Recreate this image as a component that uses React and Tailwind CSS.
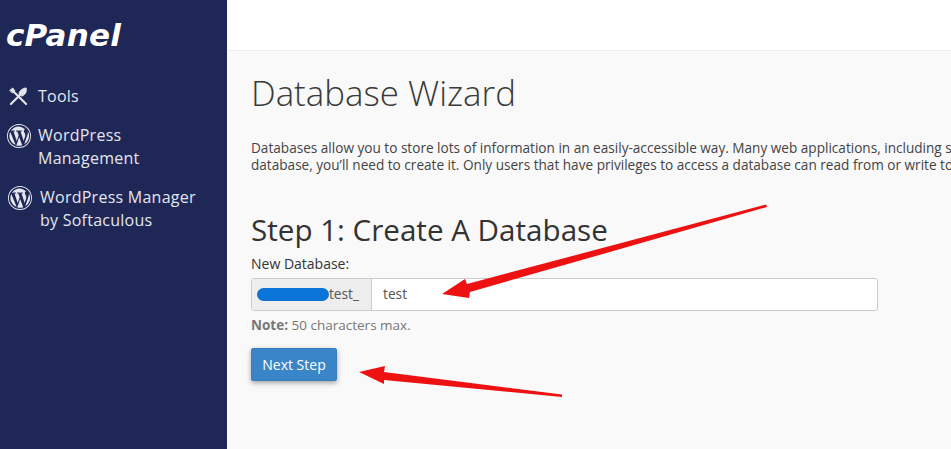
import React from 'react';

const WordPressIcon = () => (
  <svg viewBox="0 0 24 24" className="w-6 h-6 shrink-0" fill="#e4e6ee">
    <path fillRule="evenodd" d="M12 0a12 12 0 1 0 0 24 12 12 0 0 0 0-24zm0 .9a11.1 11.1 0 1 1 0 22.2A11.1 11.1 0 0 1 12 .9zm0 1.5a9.6 9.6 0 0 0-8 4.3h.9c1 0 2.6-.1 2.6-.1.5 0 .6.7 0 .8l-1 .1 3.2 9.6 2-5.8-1.4-3.8-1-.1c-.5 0-.4-.8.1-.8 0 0 1.600.1 2.500.1 1 0 2.600-.1 2.600-.1.5 0 .6.7 0 .8l-1 .1 3.200 9.500.9-3c.4-1.200.7-2.100.7-2.800 0-1.100-.4-1.800-.7-2.300-.4-.7-.8-1.300-.8-2 0-.8.6-1.500 1.400-1.500h.1A9.600 9.600 0 0 0 12 2.400zM3.300 8A9.600 9.600 0 0 0 8.700 21L3.300 8zm17.500-.8c0 .3.100.7.100 1.100 0 1-.2 2.200-.8 3.600l-2.900 8.400A9.600 9.600 0 0 0 20.800 7.200zM12.200 13l-2.900 8.400a9.600 9.600 0 0 0 5.900-.2l-3-8.200z" />
  </svg>
);

const ToolsIcon = () => (
  <svg viewBox="0 0 20 20" className="w-[19px] h-[19px] shrink-0" fill="none" stroke="#e4e6ee" strokeWidth="2.200" strokeLinecap="round">
    <path d="M5 5l13 13" />
    <path d="M1 3.500l3-2.500 2 3-2 2z" fill="#e4e6ee" strokeWidth="1" />
    <path d="M2 18l9-9" />
    <path d="M10.500 7.500c0-3 3-6 7.500-6.500 1 4-1 7.500-4.500 8.500z" fill="#e4e6ee" strokeWidth="1" />
  </svg>
);

const Arrows = () => (
  <svg className="absolute inset-0 pointer-events-none" width="951" height="449" viewBox="0 0 951 449">
    <path d="M766 204.500L767 207L470 292L469 298L442 294L465 279L467 284z" fill="#ee1111" />
    <path d="M359 372L385 366L384 372L562 394.500L562 397L384 380L384 384z" fill="#ee1111" />
  </svg>
);

export default function App() {
  return (
    <div className="relative flex w-[951px] h-[449px] overflow-hidden bg-[#f9f9f9] font-['Open_Sans',sans-serif]">
      <aside className="w-[227px] shrink-0 bg-[#1f2756] text-[#e4e6ee] text-base leading-[23px] tracking-[0.25px]">
        <div className="pl-[6px] pt-[15px] h-[84px] font-['DejaVu_Sans',sans-serif] text-[31px] leading-[40px] font-bold italic text-white tracking-[0.2px]">cPanel</div>
        <div className="flex items-center gap-[10px] pl-[9px] h-[24px]">
          <ToolsIcon />
          <span>Tools</span>
        </div>
        <div className="flex gap-[7px] pl-[7px] mt-[16px]">
          <WordPressIcon />
          <span>WordPress<br />Management</span>
        </div>
        <div className="flex gap-[8px] pl-[8px] mt-[16px]">
          <WordPressIcon />
          <span>WordPress Manager<br />by Softaculous</span>
        </div>
      </aside>
      <main className="flex-1 min-w-0 overflow-hidden">
        <header className="h-[51px] bg-white border-b border-[#eeeeee]" />
        <div className="pl-[24px]">
          <h1 className="mt-[17px] text-[34.900px] leading-[50px] font-light text-[#3a3a3a]">Database Wizard</h1>
          <p className="mt-[21px] text-[13.600px] leading-[17px] text-[#444444] whitespace-nowrap">
            Databases allow you to store lots of information in an easily-accessible way. Many web applications, including some bulletin boards<br />
            database, you’ll need to create it. Only users that have privileges to access a database can read from or write to it.
          </p>
          <h2 className="mt-[38px] text-[29.600px] leading-[38px] text-[#333333]">Step 1: Create A Database</h2>
          <label className="block mt-[5px] text-[14px] leading-[20px] text-[#333333]">New Database:</label>
          <div className="flex w-[627px] h-[33px] mt-[4px] rounded-[3px] border border-[#cccccc] bg-white text-[13.750px] overflow-hidden">
            <div className="relative w-[120px] shrink-0 flex items-center justify-end pr-[12px] bg-[#eeeeee] border-r border-[#cccccc] text-[#555555]">
              <span className="absolute left-[5px] top-[9px] w-[72px] h-[13px] rounded-full bg-[#0a74d8]" />
              test_
            </div>
            <div className="flex items-center pl-[11px] text-[#555555]">test</div>
          </div>
          <p className="mt-[4px] text-[13.500px] leading-[20px] text-[#777777]"><strong className="font-bold">Note:</strong> 50 characters max.</p>
          <button className="block mt-[13px] w-[86px] h-[33px] rounded-[2px] bg-[#3a85c8] border border-[#3a7fbd] text-white text-[14px] shadow-[0_2px_5px_rgba(0,0,0,0.35)]">Next Step</button>
        </div>
      </main>
      <Arrows />
    </div>
  );
}
